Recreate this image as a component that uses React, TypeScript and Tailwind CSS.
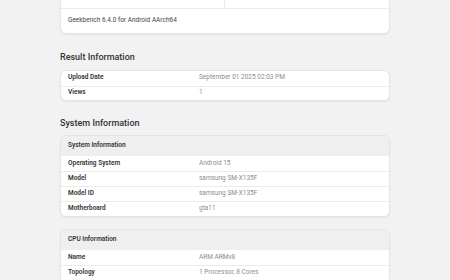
import React from "react";

type Row = [string, string];

function Card({ title, rows, rowH = "h-[15px]" }: { title?: string; rows: Row[]; rowH?: string }) {
  return (
    <div className="rounded-[6px] border border-[#e4e4e4] bg-white shadow-[0_1px_2px_rgba(0,0,0,0.06)] overflow-hidden">
      {title && (
        <div className="h-[20px] flex items-center bg-[#efefef] pl-[7px] text-[6.5px] font-semibold text-[#333]">
          {title}
        </div>
      )}
      {rows.map(([k, v], i) => (
        <div
          key={i}
          className={`flex ${rowH} items-center ${i > 0 ? "border-t border-[#ebebeb]" : ""}`}
        >
          <div className="w-[138px] shrink-0 pl-[7px] text-[6.5px] font-semibold text-[#333]">{k}</div>
          <div className="flex-1 truncate text-[6.5px] text-[#8c8c8c]">{v}</div>
        </div>
      ))}
    </div>
  );
}

function Heading({ children }: { children: React.ReactNode }) {
  return <h2 className="text-[9px] leading-[12px] font-medium text-[#333]">{children}</h2>;
}

export default function App() {
  return (
    <div
      className="h-[280px] w-[450px] bg-[#f2f2f2] overflow-hidden"
      style={{ fontFamily: "Roboto, 'Liberation Sans', sans-serif" }}
    >
      <div className="mx-auto w-[330px]">
        <div className="-mt-[11px] rounded-[6px] border border-[#e4e4e4] bg-white shadow-[0_1px_2px_rgba(0,0,0,0.06)]">
          <div className="flex h-[19px] border-b border-[#ebebeb]">
            <div className="w-1/2 border-r border-[#ebebeb]" />
            <div className="w-1/2" />
          </div>
          <div className="h-[24px] flex items-center pl-[7px] text-[6.5px] text-[#444]">
            Geekbench 6.4.0 for Android AArch64
          </div>
        </div>

        <div className="mt-[17px] mb-[7px]">
          <Heading>Result Information</Heading>
        </div>
        <Card
          rowH="h-[14.5px]"
          rows={[
            ["Upload Date", "September 01 2025 02:03 PM"],
            ["Views", "1"],
          ]}
        />

        <div className="mt-[16px] mb-[6px]">
          <Heading>System Information</Heading>
        </div>
        <Card
          title="System Information"
          rows={[
            ["Operating System", "Android 15"],
            ["Model", "samsung SM-X135F"],
            ["Model ID", "samsung SM-X135F"],
            ["Motherboard", "gta11"],
          ]}
        />

        <div className="mt-[12px]">
          <Card
            title="CPU Information"
            rows={[
              ["Name", "ARM ARMv8"],
              ["Topology", "1 Processor, 8 Cores"],
              ["", ""],
            ]}
          />
        </div>
      </div>
    </div>
  );
}
